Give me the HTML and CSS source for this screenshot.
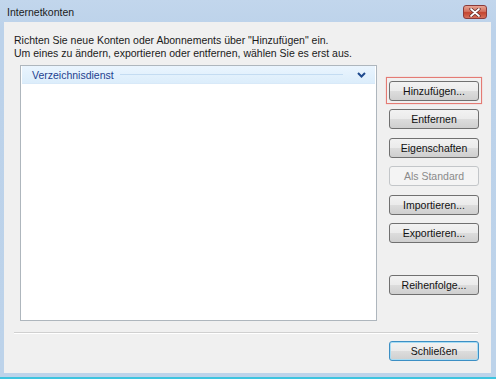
FILE: index.html
```html
<!DOCTYPE html>
<html>
<head>
<meta charset="utf-8">
<link rel="stylesheet" href="styles.css">
</head>
<body>
<div class="window">
  <div class="titlebar">
    <span class="title">Internetkonten</span>
    <span class="close">
      <svg width="12" height="9" viewBox="0 0 12 9"><path d="M2 1 L10 8 M10 1 L2 8" stroke="#5a2a2a" stroke-width="3.2" stroke-linecap="round"/><path d="M2 1 L10 8 M10 1 L2 8" stroke="#ffffff" stroke-width="1.7" stroke-linecap="round"/></svg>
    </span>
  </div>
  <div class="client">
    <p class="intro">Richten Sie neue Konten oder Abonnements über "Hinzufügen" ein.<br>Um eines zu ändern, exportieren oder entfernen, wählen Sie es erst aus.</p>
    <div class="main">
      <div class="list">
        <div class="group">
          <span class="group-name">Verzeichnisdienst</span>
          <span class="group-line"></span>
          <svg class="chev" width="9" height="6" viewBox="0 0 9 6"><path d="M1 1 L4.5 4.5 L8 1" fill="none" stroke="#1e4a8e" stroke-width="2"/></svg>
        </div>
      </div>
      <div class="buttons">
        <div class="focus"><button class="btn">Hinzufügen...</button></div>
        <button class="btn">Entfernen</button>
        <button class="btn">Eigenschaften</button>
        <button class="btn disabled">Als Standard</button>
        <button class="btn">Importieren...</button>
        <button class="btn">Exportieren...</button>
        <button class="btn spaced">Reihenfolge...</button>
      </div>
    </div>
    <div class="sep"></div>
    <div class="footer">
      <button class="btn default">Schließen</button>
    </div>
  </div>
  <div class="bottom"></div>
</div>
</body>
</html>
```
FILE: styles.css
```css
html, body {
  margin: 0;
  padding: 0;
}
body {
  width: 496px;
  height: 379px;
  overflow: hidden;
  font-family: "Liberation Sans", "Noto Sans", sans-serif;
  font-size: 10.5px;
  color: #1a1a1a;
}
.window {
  width: 496px;
  height: 379px;
  display: flex;
  flex-direction: column;
  background: linear-gradient(#c2d6ec, #bcd2ea 30px, #bdd3ea);
}
.titlebar {
  height: 22px;
  display: flex;
  align-items: flex-start;
  justify-content: space-between;
}
.title {
  padding: 6px 0 0 7px;
  font-size: 10.5px;
  color: #1b1b1b;
}
.close {
  margin: 5px 9px 0 0;
  width: 24px;
  height: 14px;
  box-sizing: border-box;
  border: 1px solid #8a3b3b;
  border-radius: 3px;
  background: linear-gradient(#e8a493, #d3715f 45%, #c4452f 55%, #d5705c);
  display: flex;
  align-items: center;
  justify-content: center;
}
.close svg { display: block; }
.client {
  margin: 0 5px 0 4px;
  height: 351px;
  background: #f0f0f0;
  display: flex;
  flex-direction: column;
}
.intro {
  margin: 12px 0 0 10px;
  line-height: 13px;
}
.main {
  display: flex;
  align-items: flex-start;
  margin: 5px 0 0 16px;
}
.list {
  width: 357px;
  height: 256px;
  box-sizing: border-box;
  border: 1px solid #aeb6bd;
  background: #ffffff;
  padding: 0 1px;
}
.group {
  height: 17px;
  display: flex;
  align-items: center;
  background: linear-gradient(#eaf5fe, #dcedfb);
  border-bottom: 1px solid #d8e9f8;
  padding: 0 9px 0 10px;
}
.group-name {
  color: #1e3f8f;
  font-size: 10.5px;
}
.group-line {
  flex: 1;
  height: 1px;
  background: #c4dcf2;
  margin: 0 14px 0 6px;
}
.chev { display: block; }
.buttons {
  width: 90px;
  margin: 16px 0 0 12px;
  display: flex;
  flex-direction: column;
  gap: 8.5px;
}
.focus {
  margin: -4px -3px -3.5px -3px;
  padding: 3px 2px 2px 2px;
  border: 1px solid #e47b74;
  box-shadow: 0 0 1px #f0a8a0;
}
.btn {
  width: 90px;
  height: 20px;
  box-sizing: border-box;
  border: 1px solid #707070;
  border-radius: 3px;
  background: linear-gradient(#f2f2f2, #ebebeb 50%, #dddddd 50%, #cfcfcf);
  font-family: "Liberation Sans", "Noto Sans", sans-serif;
  font-size: 10.5px;
  color: #111;
  padding: 0;
  display: block;
}
.btn.disabled {
  border-color: #c3c6c9;
  background: #f4f4f4;
  color: #8a8a8a;
}
.btn.spaced { margin-top: 23px; }
.sep {
  margin: 11px 13px 0 10px;
  height: 1px;
  background: #d0d0d0;
  border-bottom: 1px solid #ffffff;
}
.footer {
  display: flex;
  justify-content: flex-end;
  margin: 7px 12px 0 0;
}
.btn.default {
  border-color: #3c8fc4;
  box-shadow: inset 0 0 0 1px #a8dcf3;
}
.bottom {
  flex: 1;
  border-bottom: 2px solid #3ec4df;
}
```
